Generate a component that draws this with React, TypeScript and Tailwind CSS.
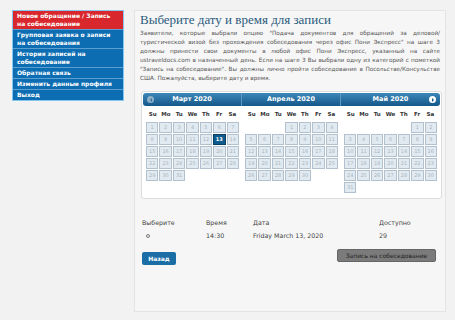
import React from 'react';

const menu = [
    {label: ['Новое обращение / Запись', 'на собеседование'], active: true},
    {label: ['Групповая заявка о записи', 'на собеседования']},
    {label: ['История записей на', 'собеседование']},
    {label: ['Обратная связь']},
    {label: ['Изменить данные профиля']},
    {label: ['Выход']},
];

const lines = [
    'Заявители, которые выбрали опцию "Подача документов для обращений за деловой/',
    'туристической визой без прохождения собеседования через офис Пони Экспресс" на шаге 3',
    'должны принести свои документы в любой офис Пони Экспресс, указанный на сайте',
    'ustraveldocs.com в назначенный день. Если на шаге 3 Вы выбрали одну из категорий с пометкой',
    '"Запись на собеседование". Вы должны лично пройти собеседование в Посольстве/Консульстве',
    'США. Пожалуйста, выберите дату и время.',
];

const months = [
    {name: 'Март 2020', start: 0, days: 31},
    {name: 'Апрель 2020', start: 3, days: 30},
    {name: 'Май 2020', start: 5, days: 31},
];

const weekDays = ['Su', 'Mo', 'Tu', 'We', 'Th', 'Fr', 'Sa'];

function Month(props: { name: string, start: number, days: number, index: number }) {
    const {name, start, days, index} = props;
    const cells: (number | null)[] = [];
    for (let i = 0; i < start; i++) cells.push(null);
    for (let d = 1; d <= days; d++) cells.push(d);

    return (
        <div className="flex-1 flex flex-col">
            <div className={`h-[13px] relative flex items-center justify-center bg-gradient-to-b from-[#3d87b9] to-[#12598a] text-white font-bold text-[6.5px] ${index === 0 ? 'rounded-l-[3px]' : ''} ${index === 2 ? 'rounded-r-[3px]' : 'border-r border-[#5d98c2]'}`}>
                {index === 0 && (
                    <span className="absolute left-[4px] top-[3px] w-[7px] h-[7px] rounded-full bg-[#8db0c9] flex items-center justify-center">
                        <span className="w-0 h-0 border-y-[2px] border-y-transparent border-r-[2.5px] border-r-[#3b6f95]"></span>
                    </span>
                )}
                {name}
                {index === 2 && (
                    <span className="absolute right-[4px] top-[3px] w-[7px] h-[7px] rounded-full bg-white flex items-center justify-center">
                        <span className="w-0 h-0 border-y-[2px] border-y-transparent border-l-[2.5px] border-l-[#15598a]"></span>
                    </span>
                )}
            </div>
            <div className="px-[3px]">
                <div className="grid grid-cols-7 h-[16px] items-center text-[5.5px] font-bold text-[#333]">
                    {weekDays.map(w => <span key={w} className="text-center">{w}</span>)}
                </div>
                <div className="grid grid-cols-7 gap-[1px]">
                    {cells.map((d, i) => d === null ? <span key={i}></span> : (
                        <span key={i}
                              className={`h-[11px] flex items-center justify-center border text-[5px] ${index === 0 && d === 13 ? 'bg-[#0e5b8d] border-[#0a3f63] text-white font-bold' : 'bg-[#e2eaf1] border-[#b2c1cd] text-[#a8b5bf]'}`}>
                            {d}
                        </span>
                    ))}
                </div>
            </div>
        </div>
    );
}

export default function App() {
    return (
        <div className="w-[455px] h-[320px] bg-[#f2f2f2] flex items-start pt-[10px] pl-[12px] gap-[10px] font-['DejaVu_Sans',sans-serif]">
            <div className="w-[112px] border border-[#86c6ee] flex flex-col">
                {menu.map((m, i) => (
                    <div key={i}
                         className={`px-[4px] py-[1px] text-white font-bold text-[6px] leading-[8px] whitespace-nowrap ${m.active ? 'bg-[#d9282d]' : 'bg-[#0d6db3]'} ${i > 0 ? 'border-t border-[#5b9fd0]' : ''}`}>
                        {m.label.map(l => <div key={l}>{l}</div>)}
                    </div>
                ))}
            </div>

            <div className="w-[312px] h-[302px] bg-[#f6f6f6] border border-[#e4e4e4] px-[5px] pt-[1px] flex flex-col">
                <h1 className="font-['Liberation_Serif',serif] text-[13px] leading-[16px] text-[#2b5b7c]">
                    Выберите дату и время для записи
                </h1>
                <div className="text-[5.7px] leading-[9px] text-[#555] mt-[1px]">
                    {lines.map((l, i) => (
                        <div key={i}
                             className={i < lines.length - 1 ? 'text-justify [text-align-last:justify] whitespace-nowrap' : ''}>{l}</div>
                    ))}
                </div>

                <div className="mt-[8px] ml-[1px] w-[301px] bg-white border border-[#dcdcdc] rounded-[3px] p-[1px] pb-[5px] flex">
                    {months.map((m, i) => <Month key={m.name} {...m} index={i}/>)}
                </div>

                <div className="mt-[18px] text-[6.3px] text-[#444]">
                    <div className="flex h-[12px] items-center">
                        <span className="w-[66px] pl-[2px]">Выберите</span>
                        <span className="w-[47px]">Время</span>
                        <span className="w-[126px]">Дата</span>
                        <span>Доступно</span>
                    </div>
                    <div className="flex h-[13px] items-center">
                        <span className="w-[66px] pl-[6px]">
                            <span className="block w-[4px] h-[4px] border border-[#777] rounded-full"></span>
                        </span>
                        <span className="w-[47px]">14:30</span>
                        <span className="w-[126px]">Friday March 13, 2020</span>
                        <span>29</span>
                    </div>
                </div>

                <div className="mt-[7px] flex justify-between items-start pl-[2px] pr-[4px]">
                    <button className="mt-[3px] w-[34px] h-[13px] bg-[#1b6ea5] rounded-[2px] text-white font-bold text-[6px]">Назад</button>
                    <button className="w-[99px] h-[13px] bg-[#7b7b7b] border border-[#666] rounded-[2px] text-[#222] text-[6px]">Запись на собеседование</button>
                </div>
            </div>
        </div>
    );
}
